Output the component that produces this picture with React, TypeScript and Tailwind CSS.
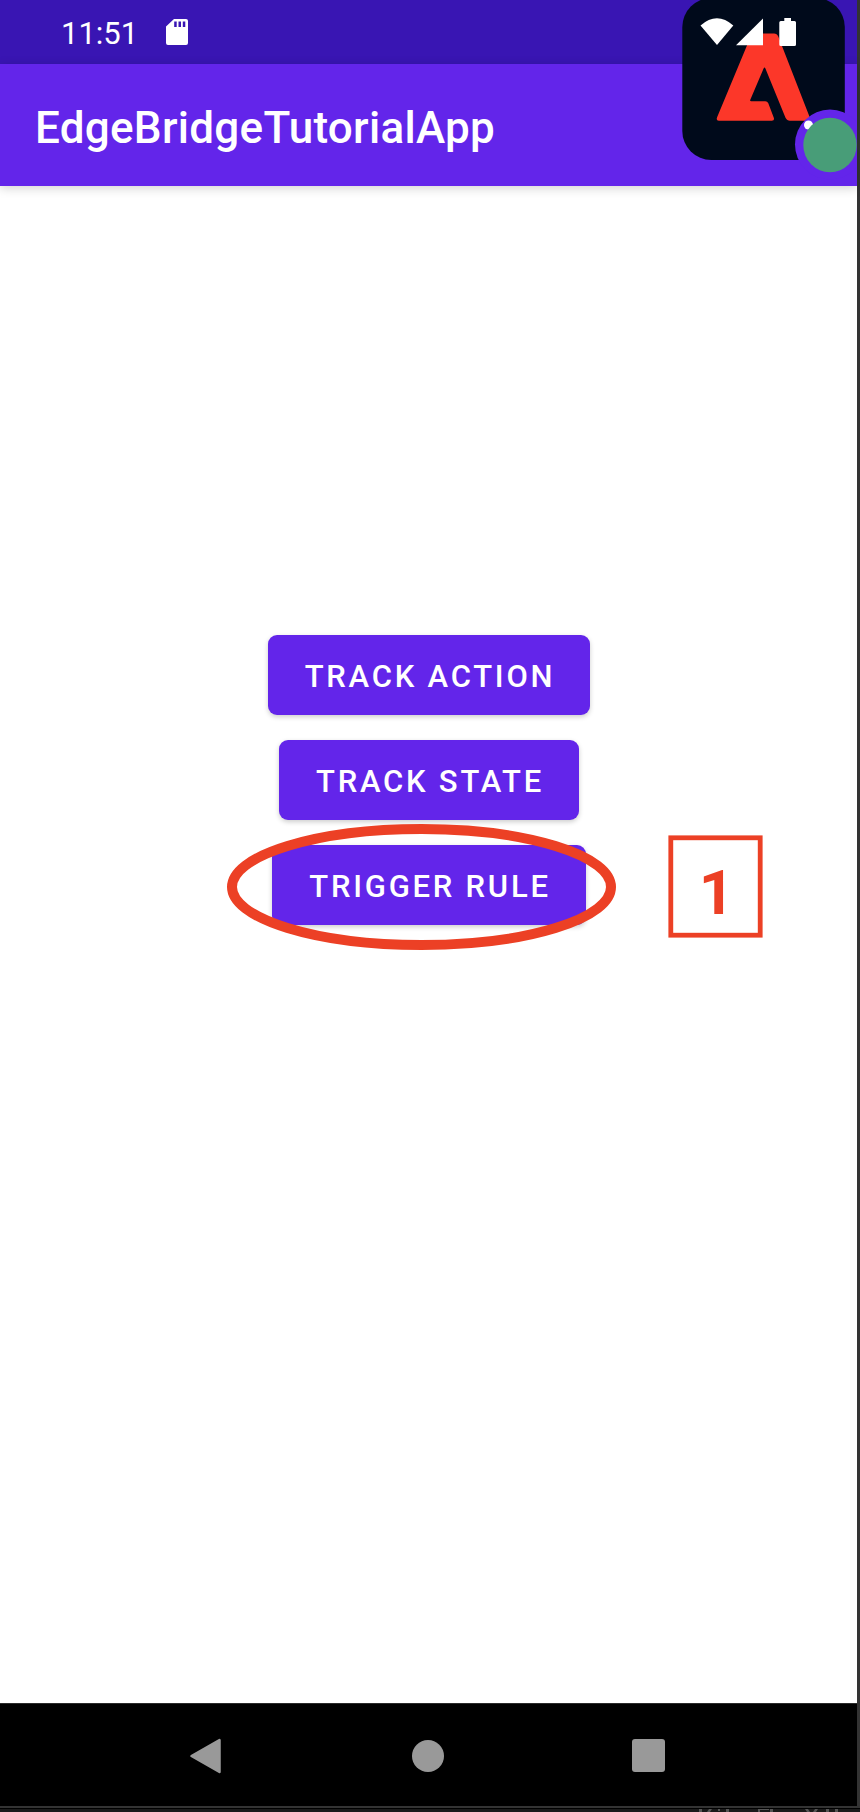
import React from "react";

const actions = [
  { label: "TRACK ACTION", size: "w-[322px]" },
  { label: "TRACK STATE", size: "w-[300px]" },
  { label: "TRIGGER RULE", size: "w-[314px]" },
];

function StatusBar() {
  return (
    <div className="flex h-16 items-center bg-[#3915b3] pl-[61px]">
      <span className="pt-[2px] text-[31px] leading-none text-white">11:51</span>
      <svg className="ml-[27px] h-7 w-6" viewBox="0 0 24 28" fill="#fff">
        <path fillRule="evenodd" d="M9 1h12a2 2 0 0 1 2 2v22a2 2 0 0 1-2 2H3a2 2 0 0 1-2-2V8.500zM9.200 3.500V9h2.500V3.500zm4.300 0V9h2.500V3.500zm4.300 0V9h2.500V3.500z" />
      </svg>
    </div>
  );
}

function LauncherOverlay() {
  return (
    <svg className="absolute top-0 left-[660px]" width="197" height="186" viewBox="0 0 197 186">
      <rect x="22.300" y="-2" width="162.500" height="162" rx="29" fill="#000a1b" />
      <path fill="#fc3729" d="M92 33.500h22q3 0 4.300 3L150 118q1 2.700-2 2.700h-18q-3 0-4.500-3l-20-49q-1-2.500-2 0l-13.200 31q-.7 1.500 1 1.500h14q2 0 3 2l5.500 14.500q1 3-2 3h-53q-3 0-1.700-3.500L88 43z" />
      <circle cx="170" cy="144.500" r="35" fill="#6325ea" />
      <circle cx="148.500" cy="125" r="4.500" fill="#fff" />
      <ellipse cx="170" cy="145" rx="26.700" ry="27.300" fill="#489d78" />
      <g fill="#fff">
        <path d="M40.500 25.500Q57 11 73.300 25.500L57 45z" />
        <path d="M103 18.500V45.300H76z" />
        <path d="M124.300 18h6.700v3h3.500q1.500 0 1.500 1.500v22q0 1.500-1.500 1.500h-13.700q-1.500 0-1.500-1.500v-22q0-1.500 1.500-1.500h3.500z" />
      </g>
    </svg>
  );
}

function NavBar() {
  return (
    <div className="flex h-[103px] items-center border-t border-[#2b2b2b] bg-black pt-[1px] pl-[189px]">
      <svg className="h-9 w-8" viewBox="0 0 32 36">
        <path d="M2.500 18L30.500 2v32z" fill="#999" stroke="#999" strokeWidth="2.500" strokeLinejoin="round" />
      </svg>
      <div className="ml-[191px] size-8 rounded-full bg-[#999]" />
      <div className="ml-[188px] size-[33px] rounded-[3px] bg-[#999]" />
    </div>
  );
}

export default function App() {
  return (
    <div className="relative h-[1812px] w-[860px] overflow-hidden bg-[#333] font-['Roboto',sans-serif]">
      <div className="flex h-[1806px] w-[857px] flex-col bg-white">
        <StatusBar />
        <header className="flex h-[122px] items-center bg-[#6325ea] pl-[35px] shadow-[0_2px_10px_rgba(0,0,0,0.18)]">
          <h1 className="pt-[6px] text-[44px] leading-none font-medium tracking-[0.280px] text-white">EdgeBridgeTutorialApp</h1>
        </header>
        <main className="flex flex-1 flex-col items-center gap-[25px] pt-[449px] pl-px">
          {actions.map(({ label, size }) => (
            <button
              key={label}
              className={`${size} flex h-20 items-center justify-center rounded-[9px] bg-[#6325ea] pt-[3px] pl-[2px] text-[31px] leading-none font-medium tracking-[2.770px] whitespace-nowrap text-white shadow-[0_2px_5px_rgba(0,0,0,0.2)]`}
            >
              {label}
            </button>
          ))}
        </main>
        <NavBar />
      </div>
      <div className="mt-0.5 h-1 border-t border-black bg-[#1a1a1a]">
        <svg className="ml-[696px] block h-[3px] w-[164px]" viewBox="0 0 164 3" fill="#555">
          <path d="M3 0h3v3H3zM13 0h3l-2 3h-3zM22 0h2v2h-2zM30 0h3v3h-3zM62 0h11v1H62zM62 1h2v2h-2zM74 0h3v3h-3zM109 0h3l2 3h-3zM119 0h3l-2 3h-3zM130 0h3v3h-3zM139 0h3v3h-3z" />
        </svg>
      </div>
      <LauncherOverlay />
      <svg className="absolute top-[824px] left-[227px]" width="389" height="126" viewBox="0 0 389 126">
        <ellipse cx="194.500" cy="63" rx="189.500" ry="58" fill="none" stroke="#ec4025" strokeWidth="10" />
      </svg>
      <div className="absolute top-[835px] left-[668px] flex h-[103px] w-[95px] items-center justify-center">
        <svg className="absolute inset-0 size-full" viewBox="0 0 95 103">
          <rect x="2.800" y="2.800" width="89.400" height="97.400" fill="none" stroke="#ec4025" strokeWidth="4.800" />
        </svg>
        <span className="pt-[13px] pl-[2px] text-[62px] leading-none font-bold text-[#ec4025]">1</span>
      </div>
    </div>
  );
}
